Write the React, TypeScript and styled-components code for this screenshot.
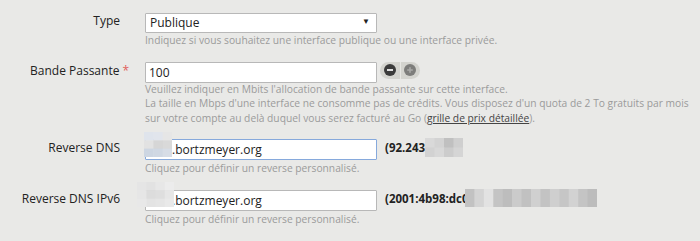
import React from "react";
import styled, { createGlobalStyle } from "styled-components";

const Global = createGlobalStyle`
  html, body { margin: 0; padding: 0; background: #e9e9e7; }
  body { font-family: "Open Sans", "Noto Sans", sans-serif; color: #222; }
`;

const Page = styled.div`
  width: 700px;
  height: 241px;
  padding-top: 10px;
  box-sizing: border-box;
  overflow: hidden;
  background: #e9e9e7;
`;

const Field = styled.div`
  display: grid;
  grid-template-columns: 120px 1fr;
  column-gap: 25px;
  margin-bottom: 12px;
`;

const Label = styled.label`
  grid-column: 1;
  grid-row: 1;
  justify-self: end;
  align-self: center;
  font-size: 12px;
  color: #222;
  white-space: nowrap;
`;

const Required = styled.span`
  color: #e0605a;
  margin-left: 3px;
  margin-right: -9px;
`;

const Controls = styled.div`
  grid-column: 2;
  grid-row: 1;
  display: flex;
  align-items: center;
`;

const Hint = styled.div<{ $gap?: number }>`
  grid-column: 2;
  grid-row: 2;
  margin-top: ${(p) => (p.$gap ?? 3)}px;
  font-size: 10.25px;
  line-height: 14.5px;
  color: #9b9b9b;
  white-space: nowrap;
`;

const HintLink = styled.a`
  color: #444;
  text-decoration: underline;
`;

const SelectWrap = styled.div`
  position: relative;
  width: 232px;
  height: 20px;
`;

const Select = styled.select`
  appearance: none;
  -webkit-appearance: none;
  width: 100%;
  height: 100%;
  box-sizing: border-box;
  border: 1px solid #b8b8b8;
  border-radius: 1px;
  background: #fff;
  font-family: "Open Sans", "Noto Sans", sans-serif;
  font-size: 12px;
  color: #222;
  padding: 0 0 0 4px;
  outline: none;
`;

const Arrow = styled.span`
  position: absolute;
  right: 7px;
  top: 5px;
  font-size: 8px;
  color: #222;
  pointer-events: none;
`;

const InputWrap = styled.div`
  position: relative;
  width: 232px;
  height: 21px;
`;

const Input = styled.input<{ $focus?: boolean; $indent?: number }>`
  width: 100%;
  height: 100%;
  box-sizing: border-box;
  border: 1px solid ${(p) => (p.$focus ? "#86a9dc" : "#b8b8b8")};
  border-radius: 1px;
  background: #fff;
  font-family: "Open Sans", "Noto Sans", sans-serif;
  font-size: 12px;
  color: #222;
  padding: 0 0 0 ${(p) => p.$indent ?? 3}px;
  outline: none;
`;

const Spinner = styled.div`
  display: flex;
  margin-left: 3px;
  width: 40px;
  height: 17px;
  border-radius: 8.5px;
  background: #d3d3ce;
  overflow: hidden;
`;

const SpinButton = styled.button<{ $divider?: boolean }>`
  flex: 1;
  border: none;
  padding: 0;
  margin: 0;
  background: transparent;
  display: flex;
  align-items: center;
  justify-content: center;
  border-left: ${(p) => (p.$divider ? "1px solid #e6e6e2" : "none")};
`;

const Ip = styled.span`
  margin-left: 8px;
  font-size: 11.5px;
  font-weight: 700;
  color: #222;
  display: flex;
  align-items: center;
`;

const Blur = styled.span<{ $shift?: number }>`
  display: block;
  margin-left: ${(p) => p.$shift ?? 0}px;
  line-height: 0;
`;

const Overlay = styled.div<{ $left: number; $top: number }>`
  position: absolute;
  left: ${(p) => p.$left}px;
  top: ${(p) => p.$top}px;
  line-height: 0;
`;

type MosaicProps = { w: number; h: number; cols: number; colors: string[][] };

function Mosaic({ w, h, cols, colors }: MosaicProps) {
  const rows = colors.length;
  const cw = w / cols;
  const ch = h / rows;
  return (
    <svg width={w} height={h} style={{ display: "block" }}>
      {colors.map((row, r) =>
        row.map((c, i) => (
          <rect key={`${r}-${i}`} x={i * cw} y={r * ch} width={cw + 0.5} height={ch + 0.5} fill={c} />
        ))
      )}
    </svg>
  );
}

function MinusIcon() {
  return (
    <svg width="12" height="12" viewBox="0 0 12 12">
      <circle cx="6" cy="6" r="6" fill="#3b3b3b" />
      <rect x="3" y="5.1" width="6" height="1.8" fill="#f2f2f2" />
    </svg>
  );
}

function PlusIcon() {
  return (
    <svg width="12" height="12" viewBox="0 0 12 12">
      <circle cx="6" cy="6" r="6" fill="#7d7d7b" />
      <rect x="3.2" y="5.2" width="5.6" height="1.6" fill="#a8a8a6" />
      <rect x="5.2" y="3.2" width="1.6" height="5.6" fill="#a8a8a6" />
    </svg>
  );
}

export default function App() {
  return (
    <Page>
      <Global />
      <Field>
        <Label>Type</Label>
        <Controls>
          <SelectWrap>
            <Select defaultValue="pub">
              <option value="pub">Publique</option>
              <option value="priv">Privée</option>
            </Select>
            <Arrow>▼</Arrow>
          </SelectWrap>
        </Controls>
        <Hint>Indiquez si vous souhaitez une interface publique ou une interface privée.</Hint>
      </Field>

      <Field>
        <Label>
          Bande Passante<Required>*</Required>
        </Label>
        <Controls>
          <InputWrap>
            <Input defaultValue="100" />
          </InputWrap>
          <Spinner>
            <SpinButton aria-label="moins">
              <MinusIcon />
            </SpinButton>
            <SpinButton $divider aria-label="plus">
              <PlusIcon />
            </SpinButton>
          </Spinner>
        </Controls>
        <Hint $gap={1}>
          Veuillez indiquer en Mbits l'allocation de bande passante sur cette interface.
          <br />
          La taille en Mbps d'une interface ne consomme pas de crédits. Vous disposez d'un quota de 2 To gratuits par mois
          <br />
          sur votre compte au delà duquel vous serez facturé au Go (<HintLink>grille de prix détaillée</HintLink>).
        </Hint>
      </Field>

      <Field>
        <Label>Reverse DNS</Label>
        <Controls>
          <InputWrap>
            <Input $focus $indent={26} defaultValue=".bortzmeyer.org" />
            <Overlay $left={-1} $top={-5}>
              <Mosaic
                w={28}
                h={25}
                cols={3}
                colors={[
                  ["#dfe4ec", "#e1e5ec", "#e6e6e6"],
                  ["#e2e2e2", "#d6d6d6", "#d9d9d9"],
                  ["#cdd6e2", "#d0d8e3", "#d7dde6"],
                ]}
              />
            </Overlay>
          </InputWrap>
          <Ip>
            (92.243
            <Blur>
              <Mosaic
                w={38}
                h={19}
                cols={4}
                colors={[
                  ["#d9d9d9", "#d3d3d3", "#c0c0c0", "#cfcfcf"],
                  ["#d2d2d2", "#d8d8d8", "#cccccc", "#d5d5d5"],
                ]}
              />
            </Blur>
          </Ip>
        </Controls>
        <Hint>Cliquez pour définir un reverse personnalisé.</Hint>
      </Field>

      <Field>
        <Label>Reverse DNS IPv6</Label>
        <Controls>
          <InputWrap>
            <Input $indent={26} defaultValue=".bortzmeyer.org" />
            <Overlay $left={-8} $top={-6}>
              <Mosaic
                w={37}
                h={25}
                cols={4}
                colors={[
                  ["#e5e5e5", "#e2e2e2", "#e7e7e7", "#ececec"],
                  ["#e6e6e6", "#dcdcdc", "#dedede", "#e6e6e6"],
                  ["#e8e8e8", "#e3e3e3", "#e5e5e5", "#e9e9e9"],
                ]}
              />
            </Overlay>
          </InputWrap>
          <Ip>
            (2001:4b98:dc0
            <Blur $shift={-4}>
              <Mosaic
                w={132}
                h={18}
                cols={14}
                colors={[
                  [
                    "#c2c2c2",
                    "#d4d4d4",
                    "#e2e2e2",
                    "#c4c4c4",
                    "#bdbdbd",
                    "#cbcbcb",
                    "#c1c1c1",
                    "#d0d0d0",
                    "#c3c3c3",
                    "#cfcfcf",
                    "#c6c6c6",
                    "#d2d2d2",
                    "#c4c4c4",
                    "#bcbcbc",
                  ],
                ]}
              />
            </Blur>
          </Ip>
        </Controls>
        <Hint>Cliquez pour définir un reverse personnalisé.</Hint>
      </Field>
    </Page>
  );
}
